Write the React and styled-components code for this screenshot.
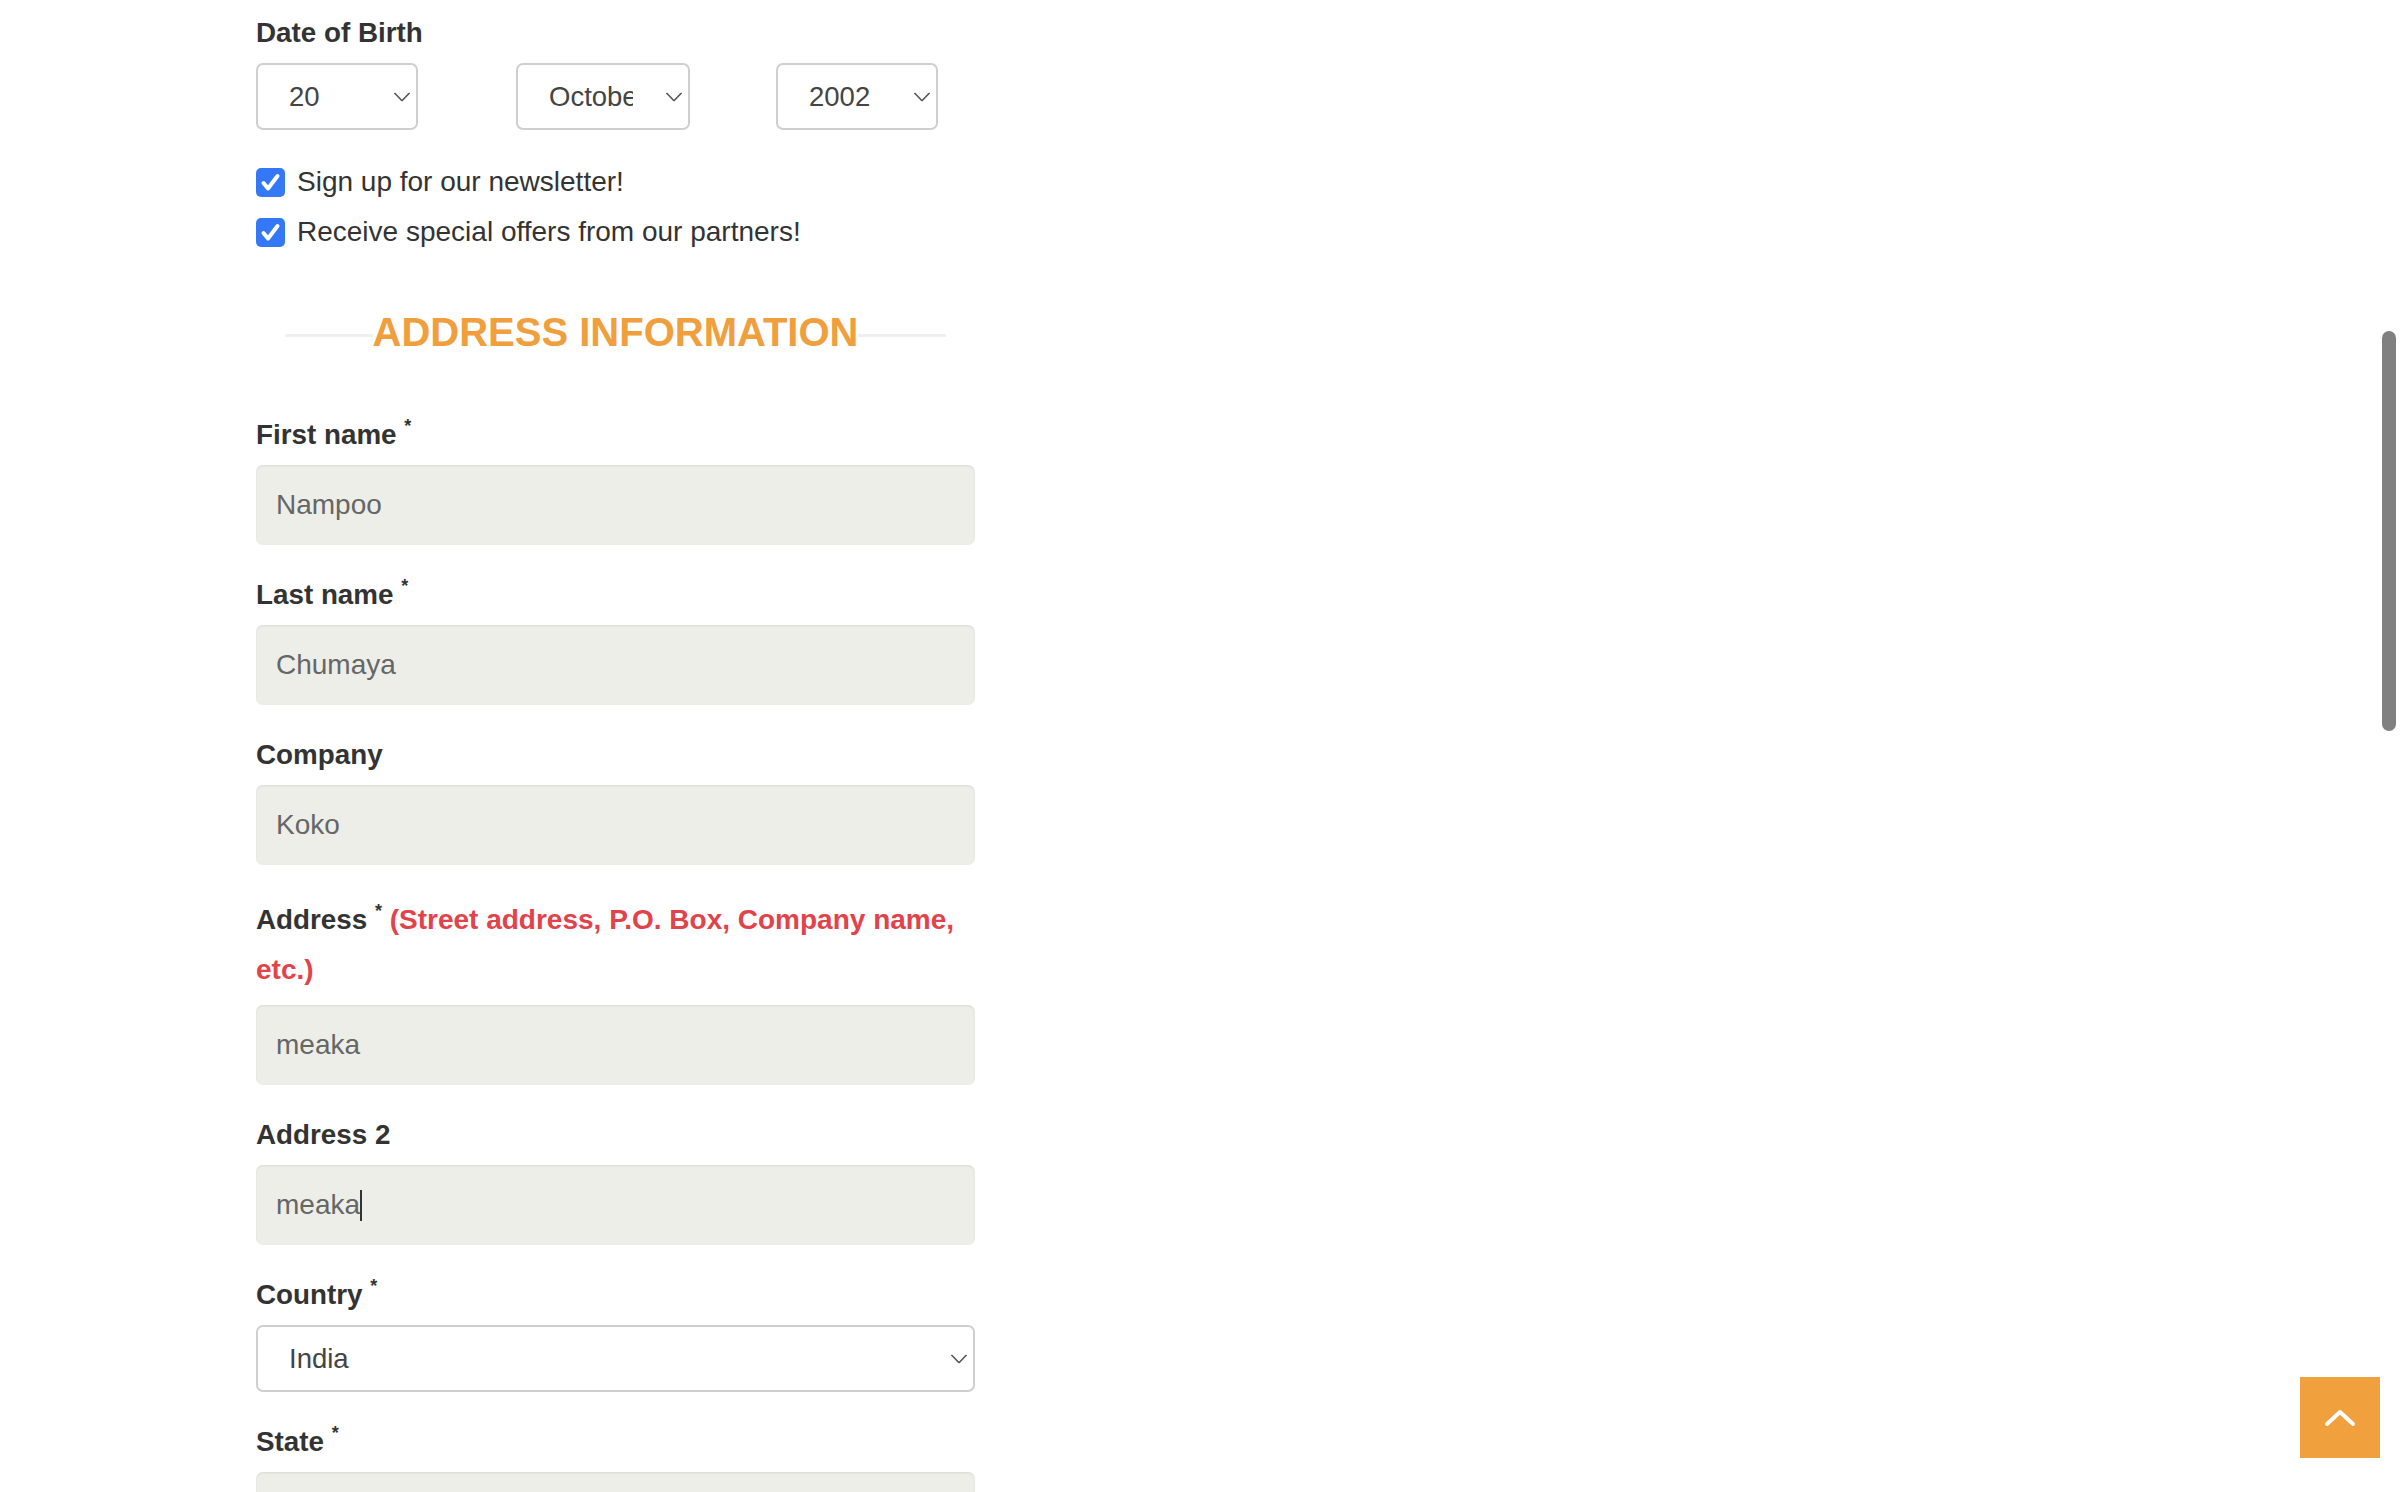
import { useState } from "react";
import styled, { createGlobalStyle } from "styled-components";

const GlobalStyle = createGlobalStyle`
    html, body {
        margin: 0;
        padding: 0;
        background: #fff;
        overflow: hidden;
    }
    body {
        font-family: "Liberation Sans", Arial, Helvetica, sans-serif;
        color: #333;
    }
    * {
        box-sizing: border-box;
    }
`;

const days = Array.from({ length: 31 }, (_, i) => String(i + 1));
const months = ["January", "February", "March", "April", "May", "June", "July", "August", "September", "October", "November", "December"];
const years = Array.from({ length: 90 }, (_, i) => String(2024 - i));
const countries = ["India", "Japan", "Thailand", "United Kingdom", "United States"];

const Chevron = ({ up, color = "#555", width = 16, height = 9, stroke = 1.6 }) => (
    <svg width={width} height={height} viewBox={`0 0 ${width} ${height}`} fill="none">
        <polyline
            points={up
                ? `${stroke},${height - stroke} ${width / 2},${stroke} ${width - stroke},${height - stroke}`
                : `${stroke / 2},${stroke / 2} ${width / 2},${height - stroke / 2} ${width - stroke / 2},${stroke / 2}`}
            stroke={color}
            strokeWidth={stroke}
            strokeLinecap="round"
            strokeLinejoin="round"
        />
    </svg>
);

function Select({ width, value, options, onChange }) {
    return (
        <SelectWrap $width={width}>
            <SelectBox value={value} onChange={(e) => onChange(e.target.value)}>
                {options.map((o) => <option key={o} value={o}>{o}</option>)}
            </SelectBox>
            <SelectArrow><Chevron /></SelectArrow>
        </SelectWrap>
    );
}

function Check({ label, checked, onToggle }) {
    return (
        <CheckRow onClick={onToggle}>
            <CheckBox $checked={checked}>
                {checked &&
                    <svg width="29" height="29" viewBox="0 0 29 29">
                        <polyline points="7.5,15 12,20.5 21.5,8" fill="none" stroke="#fff" strokeWidth="4" strokeLinecap="round" strokeLinejoin="round" />
                    </svg>
                }
            </CheckBox>
            <span>{label}</span>
        </CheckRow>
    );
}

function Field({ label, required, hint, children }) {
    return (
        <FieldGroup>
            <Label>
                {label}
                {required && <> <Star>*</Star></>}
                {hint && <> <Hint>{hint}</Hint></>}
            </Label>
            {children}
        </FieldGroup>
    );
}

// input that shows a text cursor after its value (the field being typed in)
function ActiveInput({ value, onChange }) {
    return (
        <InputWrap>
            <TextInput value={value} onChange={onChange} />
            <CaretLayer>
                <Ghost>{value}</Ghost>
                <Caret />
            </CaretLayer>
        </InputWrap>
    );
}

export default function App() {
    const [dob, setDob] = useState({ day: "20", month: "October", year: "2002" });
    const [newsletter, setNewsletter] = useState(true);
    const [offers, setOffers] = useState(true);
    const [form, setForm] = useState({
        firstName: "Nampoo",
        lastName: "Chumaya",
        company: "Koko",
        address: "meaka",
        address2: "meaka",
        country: "India",
        state: "",
    });
    const set = (key) => (e) => setForm({ ...form, [key]: e.target.value });

    return (
        <>
            <GlobalStyle />
            <Page>
                <Column>
                    <Label>Date of Birth</Label>
                    <DobRow>
                        <Select width={162} value={dob.day} options={days} onChange={(v) => setDob({ ...dob, day: v })} />
                        <Select width={174} value={dob.month} options={months} onChange={(v) => setDob({ ...dob, month: v })} />
                        <Select width={162} value={dob.year} options={years} onChange={(v) => setDob({ ...dob, year: v })} />
                    </DobRow>

                    <Checks>
                        <Check label="Sign up for our newsletter!" checked={newsletter} onToggle={() => setNewsletter(!newsletter)} />
                        <Check label="Receive special offers from our partners!" checked={offers} onToggle={() => setOffers(!offers)} />
                    </Checks>

                    <SectionTitle>
                        <TitleLine />
                        <h2>ADDRESS INFORMATION</h2>
                        <TitleLine />
                    </SectionTitle>

                    <Field label="First name" required>
                        <TextInput value={form.firstName} onChange={set("firstName")} />
                    </Field>
                    <Field label="Last name" required>
                        <TextInput value={form.lastName} onChange={set("lastName")} />
                    </Field>
                    <Field label="Company">
                        <TextInput value={form.company} onChange={set("company")} />
                    </Field>
                    <Field label="Address" required hint="(Street address, P.O. Box, Company name, etc.)">
                        <TextInput value={form.address} onChange={set("address")} />
                    </Field>
                    <Field label="Address 2">
                        <ActiveInput value={form.address2} onChange={set("address2")} />
                    </Field>
                    <Field label="Country" required>
                        <Select width={719} value={form.country} options={countries} onChange={(v) => setForm({ ...form, country: v })} />
                    </Field>
                    <Field label="State" required>
                        <TextInput value={form.state} onChange={set("state")} />
                    </Field>
                </Column>
            </Page>

            <ScrollThumb />
            <BackToTop aria-label="Back to top">
                <Chevron up color="#fff" width={34} height={20} stroke={4} />
            </BackToTop>
        </>
    );
}

const Page = styled.div`
    height: 1492px;
    overflow: hidden;
    padding: 13px 0 0 256px;
`;

const Column = styled.div`
    width: 719px;
    display: flex;
    flex-direction: column;
`;

const Label = styled.label`
    display: block;
    font-size: 27.8px;
    font-weight: bold;
    line-height: 40px;
    color: #333;
    margin-bottom: 10px;
`;

const Star = styled.span`
    font-size: 18px;
    vertical-align: 12px;
    line-height: 0;
`;

const Hint = styled.span`
    color: #e2434a;
    font-size: 28px;
    line-height: 50px;
`;

const DobRow = styled.div`
    display: grid;
    grid-template-columns: 260px 260px auto;
`;

const SelectWrap = styled.div`
    position: relative;
    width: ${(p) => p.$width}px;
    height: 67px;
`;

const SelectBox = styled.select`
    appearance: none;
    -webkit-appearance: none;
    width: 100%;
    height: 100%;
    border: 2px solid #cfcfcf;
    border-radius: 7px;
    background: #fff;
    padding: 0 55px 0 31px;
    font-family: inherit;
    font-size: 27.5px;
    color: #444;
    outline: none;
    cursor: pointer;
`;

const SelectArrow = styled.span`
    position: absolute;
    right: 8px;
    top: 50%;
    transform: translateY(-50%);
    display: flex;
    pointer-events: none;
`;

const Checks = styled.div`
    display: flex;
    flex-direction: column;
    margin-top: 27px;
`;

const CheckRow = styled.div`
    display: flex;
    align-items: center;
    gap: 12px;
    height: 50px;
    font-size: 28px;
    line-height: 50px;
    color: #333;
    cursor: pointer;
`;

const CheckBox = styled.div`
    width: 29px;
    height: 29px;
    border-radius: 5px;
    background: ${(p) => (p.$checked ? "#3478f6" : "#fff")};
    border: ${(p) => (p.$checked ? "none" : "2px solid #999")};
    display: flex;
    flex-shrink: 0;
`;

const SectionTitle = styled.div`
    display: flex;
    align-items: center;
    margin: 45px 29px 53px;
    height: 60px;

    h2 {
        margin: 0;
        font-size: 40px;
        font-weight: bold;
        line-height: 60px;
        color: #f19e3c;
        white-space: nowrap;
    }
`;

const TitleLine = styled.div`
    flex: 1;
    height: 3px;
    margin-top: 6px;
    background: #f0f0f0;
`;

const FieldGroup = styled.div`
    margin-bottom: 30px;
`;

const TextInput = styled.input`
    display: block;
    width: 100%;
    height: 80px;
    border: none;
    border-radius: 7px;
    background: #eeeee9;
    box-shadow: inset 0 1px 2px rgba(0, 0, 0, 0.09);
    padding: 0 20px;
    font-family: inherit;
    font-size: 28px;
    color: #666;
    outline: none;
`;

const InputWrap = styled.div`
    position: relative;
`;

const CaretLayer = styled.div`
    position: absolute;
    inset: 0;
    padding: 0 20px;
    display: flex;
    align-items: center;
    pointer-events: none;
    font-size: 28px;
`;

const Ghost = styled.span`
    color: transparent;
    white-space: pre;
`;

const Caret = styled.span`
    width: 2px;
    height: 31px;
    background: #333;
`;

const ScrollThumb = styled.div`
    position: fixed;
    right: 4px;
    top: 331px;
    width: 14px;
    height: 400px;
    border-radius: 7px;
    background: #808080;
`;

const BackToTop = styled.button`
    position: fixed;
    right: 20px;
    bottom: 34px;
    width: 80px;
    height: 81px;
    border: none;
    padding: 0;
    background: #f0a03d;
    display: flex;
    align-items: center;
    justify-content: center;
    cursor: pointer;
`;
